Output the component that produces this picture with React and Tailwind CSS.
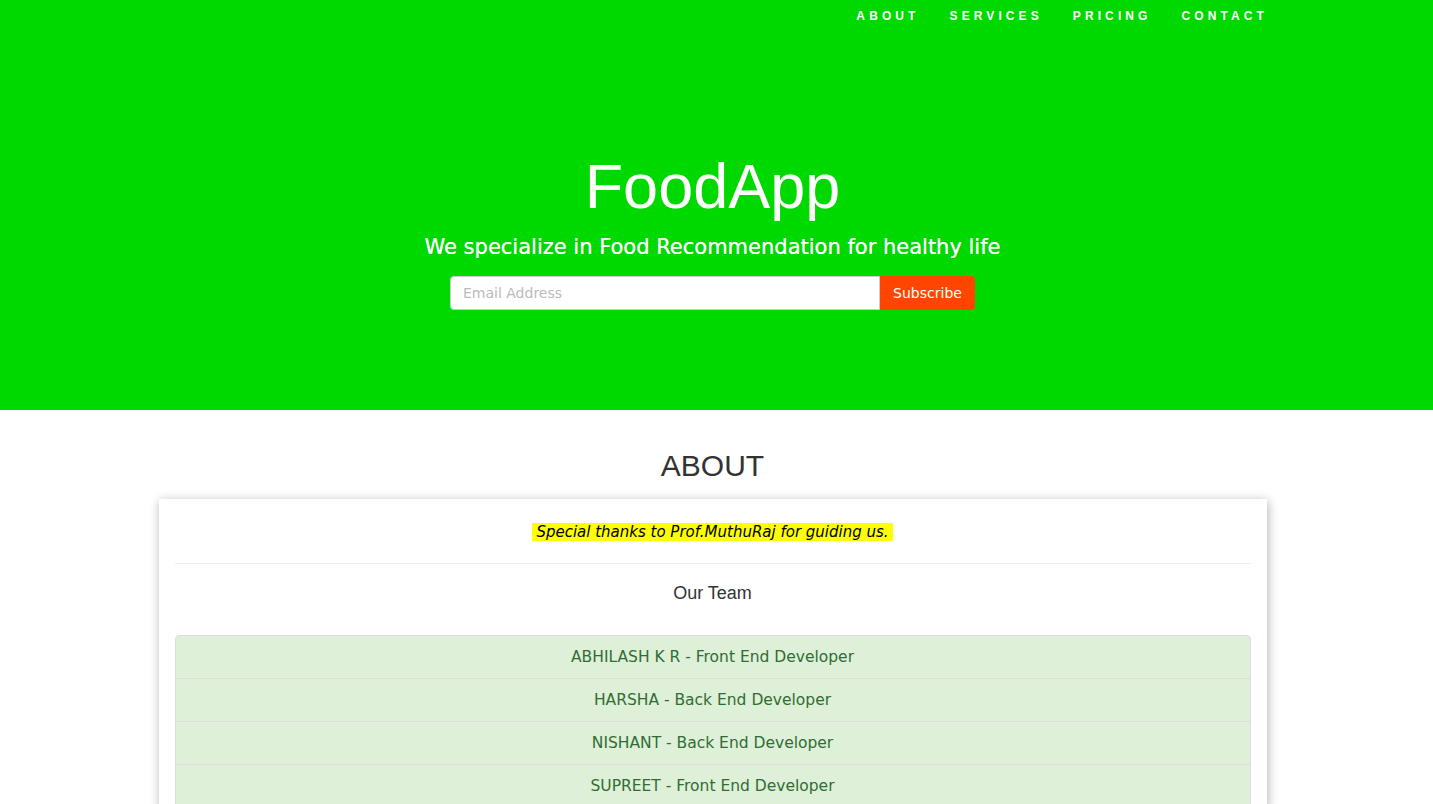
import React from 'react';

const navItems = ['ABOUT', 'SERVICES', 'PRICING', 'CONTACT'];

const team = [
  'ABHILASH K R - Front End Developer',
  'HARSHA - Back End Developer',
  'NISHANT - Back End Developer',
  'SUPREET - Front End Developer',
];

export default function App() {
  return (
    <div className="min-h-screen bg-white font-['DejaVu_Sans',Verdana,sans-serif]">
      {/* Hero */}
      <header className="h-[410px] bg-[#00d900] flex flex-col">
        <nav className="flex justify-end pr-[150px] h-[32px] items-center">
          {navItems.map((item) => (
            <a
              key={item}
              href="#"
              className="px-[15px] text-[12px] font-bold tracking-[4.1px] text-white font-['Liberation_Sans',Arial,sans-serif]"
            >
              {item}
            </a>
          ))}
        </nav>

        <div className="flex flex-col items-center mt-[119px] pr-[8px]">
          <h1 className="text-[63px] leading-[70px] text-white font-['Liberation_Sans',Arial,sans-serif]">FoodApp</h1>
          <p className="mt-[12px] text-[21px] leading-[28px] text-white [text-shadow:0_0_0.4px_#fff]">
            We specialize in Food Recommendation for healthy life
          </p>
          <form className="mt-[15px] flex w-[525px]" onSubmit={(e) => e.preventDefault()}>
            <input
              type="email"
              placeholder="Email Address"
              className="flex-1 h-[34px] px-3 text-[14px] text-gray-700 bg-white rounded-l-[4px] border border-[#ccc] placeholder:text-[#bbb] outline-none"
            />
            <button
              type="submit"
              className="h-[34px] w-[95px] bg-[#ff4500] text-white text-[14px] rounded-r-[4px]"
            >
              Subscribe
            </button>
          </form>
        </div>
      </header>

      {/* About */}
      <section className="pt-[38px] flex flex-col items-center pr-[8px]">
        <h2 className="text-[30px] leading-[36px] text-[#333] font-['Liberation_Sans',Arial,sans-serif]">ABOUT</h2>
        <div className="mt-[15px] w-[1108px] bg-white shadow-[1px_2px_10px_rgba(0,0,0,0.3)] px-4 pt-[22px]">
          <p className="text-center text-[15px] leading-[22px]">
            <span className="bg-[#ffff00] px-1 italic text-black">Special thanks to Prof.MuthuRaj for guiding us.</span>
          </p>
          <hr className="mt-5 border-0 border-t border-[#eee]" />
          <h3 className="mt-[18px] text-center text-[18px] leading-[22px] text-[#333] font-['Liberation_Sans',Arial,sans-serif]">
            Our Team
          </h3>
          <ul className="mt-[31px] rounded-t-[4px] overflow-hidden">
            {team.map((member, i) => (
              <li
                key={member}
                className={`bg-[#dff0d8] text-[#2f6d33] text-center text-[15.5px] leading-[22px] py-[10px] border-x border-b border-[#ddd] ${i === 0 ? 'border-t rounded-t-[4px]' : ''}`}
              >
                {member}
              </li>
            ))}
          </ul>
        </div>
      </section>
    </div>
  );
}
